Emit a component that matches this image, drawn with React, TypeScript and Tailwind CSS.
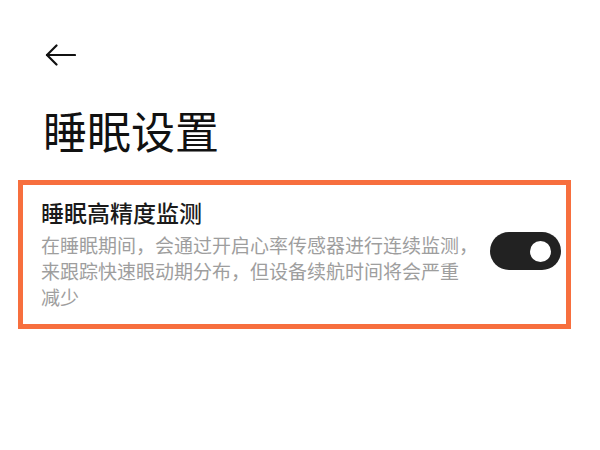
import React from "react";

const fontStack = '"Noto Sans CJK SC", "Noto Sans", sans-serif';

function BackArrow() {
  return (
    <svg width="31" height="22" viewBox="0 0 31 22" fill="none">
      <path d="M2 11H30" stroke="#111" strokeWidth="2.2" strokeLinecap="round" />
      <path d="M11.5 1.5L2 11L11.5 20.5" stroke="#111" strokeWidth="2.2" strokeLinecap="round" strokeLinejoin="round" />
    </svg>
  );
}

function Toggle() {
  return (
    <div className="w-[71px] h-[38px] rounded-full bg-[#222222] flex items-center justify-end pr-[10px]">
      <div className="w-[21px] h-[21px] rounded-full bg-white" />
    </div>
  );
}

export default function App() {
  return (
    <div className="w-[600px] h-[450px] bg-white overflow-hidden" style={{ fontFamily: fontStack }}>
      <div className="pt-[44px] pl-[45px] h-[66px]">
        <BackArrow />
      </div>
      <h1 className="mt-[42px] ml-[43px] text-[44px] leading-none text-[#111111] font-normal">睡眠设置</h1>
      <div className="mt-[28px] ml-[18px] w-[553px] h-[149px] border-[5px] border-[#f76f3e] flex items-start pl-[18px] pr-[5px] pt-[16px]">
        <div className="flex-1">
          <div className="text-[23px] leading-none text-[#1a1a1a] font-medium">睡眠高精度监测</div>
          <div className="mt-[8px] text-[19px] leading-[26px] text-[#9e9e9e] whitespace-nowrap">
            在睡眠期间，会通过开启心率传感器进行连续监测，
            <br />
            来跟踪快速眼动期分布，但设备续航时间将会严重
            <br />
            减少
          </div>
        </div>
        <div className="mt-[31px]">
          <Toggle />
        </div>
      </div>
    </div>
  );
}
